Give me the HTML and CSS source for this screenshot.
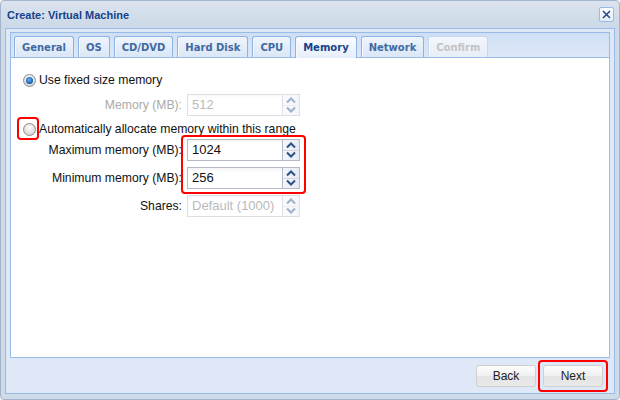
FILE: index.html
```html
<!DOCTYPE html>
<html>
<head>
<meta charset="utf-8">
<link rel="stylesheet" href="styles.css">
</head>
<body>
<div class="window">
  <div class="header">
    <span class="title">Create: Virtual Machine</span>
    <span class="close"><svg width="13" height="13" viewBox="0 0 13 13"><path d="M3 3 L10 10 M10 3 L3 10" stroke="#2a4a86" stroke-width="1.6" fill="none"/></svg></span>
  </div>
  <div class="wbody">
    <div class="tabpanel">
      <div class="tabstrip">
        <span class="tab">General</span>
        <span class="tab">OS</span>
        <span class="tab">CD/DVD</span>
        <span class="tab">Hard Disk</span>
        <span class="tab">CPU</span>
        <span class="tab active">Memory</span>
        <span class="tab">Network</span>
        <span class="tab disabled">Confirm</span>
      </div>
      <div class="tabbody">
        <div class="radiorow first">
          <span class="radio on"></span>
          <span class="rlabel">Use fixed size memory</span>
        </div>
        <div class="grid one">
          <span class="label dis">Memory (MB):</span>
          <div class="field dis"><span class="val">512</span><span class="spin"><span class="half"><svg width="12" height="8" viewBox="0 0 12 8"><path d="M2 6.5 L6 2.5 L10 6.5" stroke="#2c4f86" stroke-width="2" fill="none"/></svg></span><span class="half"><svg width="12" height="8" viewBox="0 0 12 8"><path d="M2 1.5 L6 5.5 L10 1.5" stroke="#2c4f86" stroke-width="2" fill="none"/></svg></span></span></div>
        </div>
        <div class="radiorow second">
          <span class="radio hl"></span>
          <span class="rlabel">Automatically allocate memory within this range</span>
        </div>
        <div class="grid three">
          <span class="label">Maximum memory (MB):</span>
          <div class="field mark"><span class="val">1024</span><span class="spin"><span class="half"><svg width="12" height="8" viewBox="0 0 12 8"><path d="M2 6.5 L6 2.5 L10 6.5" stroke="#2c4f86" stroke-width="2" fill="none"/></svg></span><span class="half"><svg width="12" height="8" viewBox="0 0 12 8"><path d="M2 1.5 L6 5.5 L10 1.5" stroke="#2c4f86" stroke-width="2" fill="none"/></svg></span></span></div>
          <span class="label">Minimum memory (MB):</span>
          <div class="field"><span class="val">256</span><span class="spin"><span class="half"><svg width="12" height="8" viewBox="0 0 12 8"><path d="M2 6.5 L6 2.5 L10 6.5" stroke="#2c4f86" stroke-width="2" fill="none"/></svg></span><span class="half"><svg width="12" height="8" viewBox="0 0 12 8"><path d="M2 1.5 L6 5.5 L10 1.5" stroke="#2c4f86" stroke-width="2" fill="none"/></svg></span></span></div>
          <span class="label">Shares:</span>
          <div class="field dis"><span class="val">Default (1000)</span><span class="spin"><span class="half"><svg width="12" height="8" viewBox="0 0 12 8"><path d="M2 6.5 L6 2.5 L10 6.5" stroke="#2c4f86" stroke-width="2" fill="none"/></svg></span><span class="half"><svg width="12" height="8" viewBox="0 0 12 8"><path d="M2 1.5 L6 5.5 L10 1.5" stroke="#2c4f86" stroke-width="2" fill="none"/></svg></span></span></div>
        </div>
      </div>
    </div>
    <div class="footer">
      <button class="btn">Back</button>
      <button class="btn hl">Next</button>
    </div>
  </div>
</div>
</body>
</html>
```
FILE: styles.css
```css
html, body { margin: 0; padding: 0; background: #fff; }
body { font-family: "Liberation Sans", Arial, sans-serif; }

.window {
  width: 620px; height: 400px; box-sizing: border-box;
  border: 1px solid #a2b4cc; border-radius: 4px;
  background: linear-gradient(#dbe4ef, #cbd8e7 28px, #cfdbe9 28px, #cfdbe9);
  padding: 0 4px 5px 4px;
  display: flex; flex-direction: column;
}
.header {
  height: 27px; display: flex; align-items: center; justify-content: space-between;
  padding: 0 1px 0 2px;
}
.title { color: #15428b; font-weight: bold; font-size: 11px; }
.close {
  width: 13px; height: 13px; border: 1px solid #99bbe8; border-radius: 2px;
  background: linear-gradient(#fdfeff, #e4ecf7); display: flex; margin-top: -1px;
}
.wbody {
  flex: 1; border: 1px solid #99bbe8; background: #dfe8f6;
  padding: 3px 4px 0 4px; display: flex; flex-direction: column;
}
.tabpanel { flex: 1; border: 1px solid #99bbe8; display: flex; flex-direction: column; }
.tabstrip {
  height: 21px; padding: 3px 0 0 3px; display: flex; gap: 4px;
  background: linear-gradient(#cedff5, #dde8f7);
  border-bottom: 1px solid #99bbe8;
}
.tab {
  height: 20px; line-height: 21px; padding: 0 7px; border: 1px solid #8db2e3; border-bottom: none;
  border-radius: 3px 3px 0 0; font-family: "DejaVu Sans", Verdana, sans-serif;
  font-size: 10px; font-weight: bold; color: #416aa3;
  background: linear-gradient(#eef4fc, #dbe7f7);
  box-shadow: inset 1px 1px 0 #f5f9fe;
}
.tab.active { color: #15428b; background: linear-gradient(#fbfdff, #e6eefa); height: 21px; margin-bottom: -1px; }
.tab.disabled { color: #c4c4c4; border-color: #c7d8ee; background: linear-gradient(#f2f6fc, #e8eef8); }

.tabbody { flex: 1; background: #fff; padding: 15px 0 0 0; font-size: 12px; color: #111; }
.radiorow { display: flex; align-items: center; height: 14px; padding-left: 12px; }
.radiorow.second { margin-top: 6px; }
.rlabel { margin-left: 3px; font-size: 12.2px; }
.radio {
  width: 11px; height: 11px; border-radius: 50%; border: 1px solid #8d8d8d; position: relative;
  background: radial-gradient(circle at 50% 35%, #ffffff, #d3d3d3 80%);
}
.radio.on::after {
  content: ''; position: absolute; left: 2px; top: 2px; width: 7px; height: 7px; border-radius: 50%;
  background: radial-gradient(circle at 45% 40%, #6fb2ef, #0d5aa8 70%, #0a3f7a);
}
.hl { position: relative; }
.hl::before, .mark::before {
  content: ''; position: absolute; border: 2px solid #f00; border-radius: 4px; pointer-events: none;
}
.radio.hl::before { left: -7px; top: -7px; width: 18px; height: 19px; }
.btn.hl::before { left: -6px; top: -6px; right: -6px; bottom: -6px; }
.mark::before { left: -6px; top: -4px; right: -6px; bottom: -33px; }

.grid {
  display: grid; grid-template-columns: 171px 113px; column-gap: 5px; row-gap: 6px;
  align-items: center;
}
.grid.one { margin-top: 7px; }
.grid.three { margin-top: 3px; }
.label { text-align: right; font-size: 12.2px; color: #111; }
.label.dis { color: #aaa; }
.field {
  height: 22px; box-sizing: border-box; display: flex; position: relative;
}
.field .val {
  flex: 1; border: 1px solid #b5b8c8; border-right: none; line-height: 20px; padding-left: 4px;
  font-size: 13px; color: #111; background: linear-gradient(#f4f4f4, #fff 4px);
}
.field .spin {
  width: 16px; border: 1px solid #b5b8c8; display: flex; flex-direction: column;
  background: linear-gradient(90deg, #f4f6fa, #e6ebf3);
}
.spin .half { flex: 1; display: flex; align-items: center; justify-content: center; }
.spin .half + .half { border-top: 1px solid #d3d8e2; }
.field.dis { opacity: 0.45; }
.field.dis .val { color: #666; }

.footer { height: 35px; display: flex; align-items: center; justify-content: flex-end; gap: 7px; padding-right: 7px; }
.btn {
  width: 60px; height: 22px; border: 1px solid #cfcfcf; border-radius: 3px;
  background: linear-gradient(#fdfdfd, #f0f0f0 50%, #e4e4e4 51%, #e9e9e9);
  font-family: "Liberation Sans", Arial, sans-serif; font-size: 12px; color: #222; padding: 0;
}
```
